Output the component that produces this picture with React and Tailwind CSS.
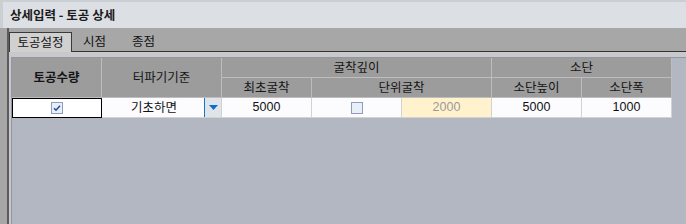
import React from 'react'

const kr = "font-['Noto_Sans_CJK_KR','Noto_Sans',sans-serif]"
const num = "font-['Liberation_Sans','Noto_Sans_CJK_KR',sans-serif]"

const CheckBox = ({ checked }) => (
  <svg width="12" height="12" viewBox="0 0 12 12">
    <rect x="0.5" y="0.5" width="11" height="11" fill="#e9eff9" stroke="#8e9dbd" />
    {checked && (
      <path d="M3 6.2 L5 8.2 L9 3.8" fill="none" stroke="#1f4f9e" strokeWidth="1.6" />
    )}
  </svg>
)

const Head = ({ children, className = '' }) => (
  <div
    className={`flex items-center justify-center bg-[#9c9c9c] border-r border-b border-[#bdbdbd] text-[#151515] ${className}`}
  >
    {children}
  </div>
)

const Cell = ({ children, className = '' }) => (
  <div
    className={`flex items-center justify-center bg-[#fcfcff] border-r border-b border-[#d2d2d2] ${className}`}
  >
    {children}
  </div>
)

const App = () => {
  return (
    <div className={`w-[686px] h-[224px] overflow-hidden bg-[#a7a7a7] flex flex-col text-[12.5px] text-[#111] ${kr}`}>
      <div className="h-[28px] shrink-0 bg-[#dcdfe4] border-t-[2px] border-l-[3px] border-[#cbced3] flex items-center pl-[7px] font-bold text-[12.5px] text-[#1b1b1b]">
        상세입력 - 토공 상세
      </div>

      <div className="flex-1 flex pl-[7px]">
        <div className="flex-1 flex flex-col border-l-2 border-[#5c5c5c]">
          <div className="h-[23px] shrink-0 flex items-end">
            <div className="relative z-10 -mb-px h-[20px] w-[63px] bg-[#d0d0d0] border-l border-t border-r border-[#3a3a3a] flex items-center justify-center">
              토공설정
            </div>
            <div className="ml-[11px] h-[20px] flex items-center">시점</div>
            <div className="ml-[26px] h-[20px] flex items-center">종점</div>
          </div>

          <div className="flex-1 flex flex-col bg-[#c9c9c9] border-t border-[#333] pt-[5px] pl-[2px]">
            <div className="flex-1 bg-[#b3b7c1] border-l border-t border-[#8f95aa]">
              <div className="grid grid-cols-[90px_120px_90px_90px_90px_90px_90px] grid-rows-[20px_20px_20px] w-max">
                <Head className="row-span-2 font-bold">토공수량</Head>
                <Head className="row-span-2">터파기기준</Head>
                <Head className="col-span-3">굴착깊이</Head>
                <Head className="col-span-2">소단</Head>
                <Head>최초굴착</Head>
                <Head className="col-span-2">단위굴착</Head>
                <Head>소단높이</Head>
                <Head>소단폭</Head>

                <div className="flex items-center justify-center bg-white border border-black">
                  <CheckBox checked />
                </div>
                <Cell className="justify-between">
                  <span className="flex-1 text-center pl-[2px]">기초하면</span>
                  <div className="h-full w-[17px] border-l border-[#0a78d4] bg-[#dfe3ea] flex items-center justify-center">
                    <svg width="9" height="5" viewBox="0 0 9 5">
                      <path d="M0 0 H9 L4.5 5 Z" fill="#0a6fc8" />
                    </svg>
                  </div>
                </Cell>
                <Cell className={`${num} text-[12.5px]`}>5000</Cell>
                <Cell>
                  <CheckBox />
                </Cell>
                <Cell className={`${num} text-[12.5px] !bg-[#fff2cc] text-[#9a9a9a]`}>2000</Cell>
                <Cell className={`${num} text-[12.5px]`}>5000</Cell>
                <Cell className={`${num} text-[12.5px]`}>1000</Cell>
              </div>
            </div>
          </div>
        </div>
      </div>
    </div>
  )
}

export default App
